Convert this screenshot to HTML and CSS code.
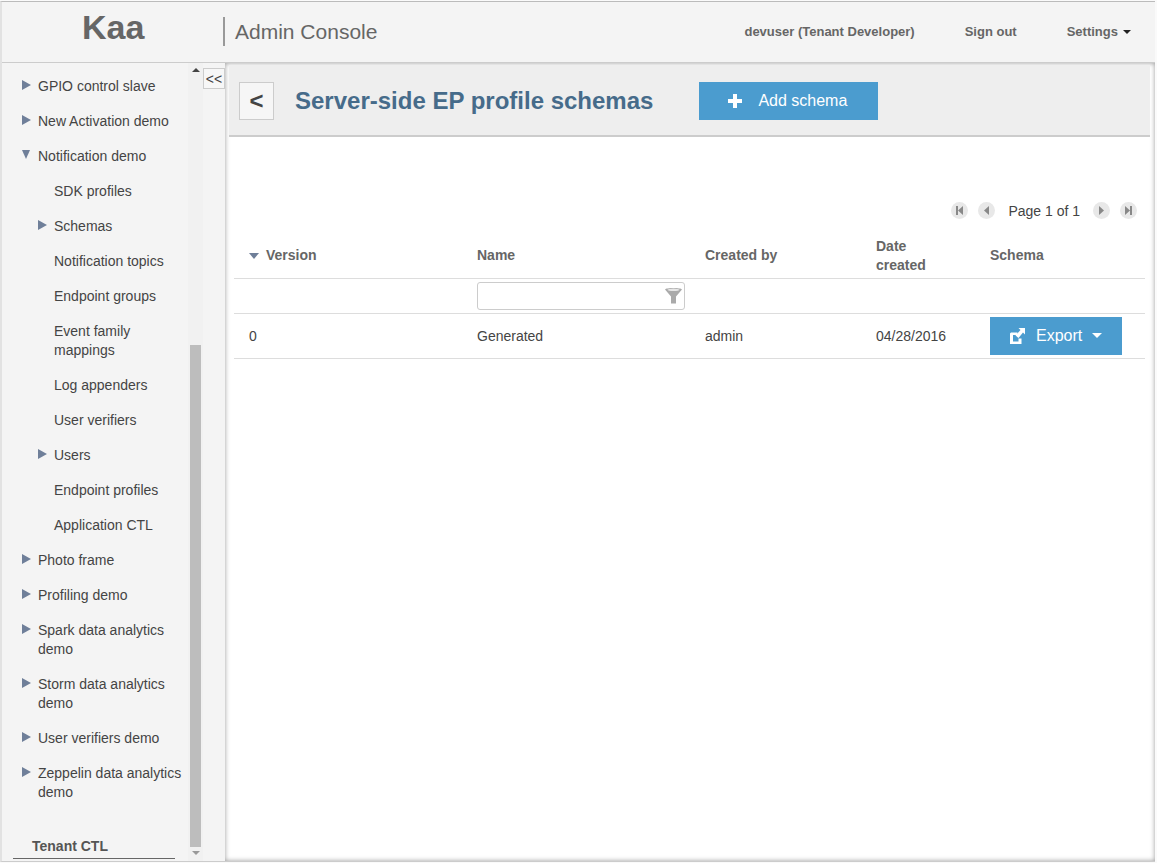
FILE: index.html
```html
<!DOCTYPE html>
<html lang="en">
<head>
    <meta charset="UTF-8">
    <title>Kaa Admin Console</title>
    <link rel="stylesheet" href="styles.css">
</head>
<body>

<div class="app">
    <!-- Top bar -->
    <header class="topbar">
        <div class="logo">Kaa</div>
        <div class="console-title">Admin Console</div>
        <nav class="top-links">
            <a class="top-link user-link">devuser (Tenant Developer)</a>
            <a class="top-link signout-link">Sign out</a>
            <a class="top-link">Settings<span class="caret"></span></a>
        </nav>
    </header>

    <div class="workspace">
        <!-- Navigation tree -->
        <aside class="sidebar">
            <div class="tree">
                <ul class="tree-list">
                    <li class="tree-row"><span class="arrow"></span>GPIO control slave</li>
                    <li class="tree-row"><span class="arrow"></span>New Activation demo</li>
                    <li class="tree-row"><span class="arrow arrow-open"></span>Notification demo</li>
                    <li class="tree-row child">SDK profiles</li>
                    <li class="tree-row child"><span class="arrow"></span>Schemas</li>
                    <li class="tree-row child">Notification topics</li>
                    <li class="tree-row child">Endpoint groups</li>
                    <li class="tree-row child">Event family<br>mappings</li>
                    <li class="tree-row child">Log appenders</li>
                    <li class="tree-row child">User verifiers</li>
                    <li class="tree-row child"><span class="arrow"></span>Users</li>
                    <li class="tree-row child">Endpoint profiles</li>
                    <li class="tree-row child">Application CTL</li>
                    <li class="tree-row"><span class="arrow"></span>Photo frame</li>
                    <li class="tree-row"><span class="arrow"></span>Profiling demo</li>
                    <li class="tree-row"><span class="arrow"></span>Spark data analytics<br>demo</li>
                    <li class="tree-row"><span class="arrow"></span>Storm data analytics<br>demo</li>
                    <li class="tree-row"><span class="arrow"></span>User verifiers demo</li>
                    <li class="tree-row"><span class="arrow"></span>Zeppelin data analytics<br>demo</li>
                </ul>
                <div class="tree-section">Tenant CTL</div>
            </div>
            <div class="scrollbar">
                <span class="scroll-up"></span>
                <div class="scroll-thumb"></div>
                <span class="scroll-down"></span>
            </div>
            <div class="collapse-col">
                <button class="collapse-btn">&lt;&lt;</button>
            </div>
        </aside>

        <!-- Main panel -->
        <main class="main">
            <div class="toolbar">
                <button class="back-btn">&lt;</button>
                <h1 class="page-title">Server-side EP profile schemas</h1>
                <button class="primary-btn add-btn">
                    <svg class="plus-icon" width="14" height="14" viewBox="0 0 14 14"><path d="M5 0h4v5h5v4H9v5H5V9H0V5h5z" fill="#fff"/></svg>
                    Add schema
                </button>
            </div>

            <div class="pager">
                <span class="page-icon"><svg width="17" height="17" viewBox="0 0 17 17"><path d="M5 4h2v9H5zM12 4v9L7 8.500z" fill="#888"/></svg></span>
                <span class="page-icon"><svg width="17" height="17" viewBox="0 0 17 17"><path d="M11 4v9L6 8.500z" fill="#888"/></svg></span>
                <span class="page-text">Page 1 of 1</span>
                <span class="page-icon"><svg width="17" height="17" viewBox="0 0 17 17"><path d="M6 4v9l5-4.500z" fill="#888"/></svg></span>
                <span class="page-icon"><svg width="17" height="17" viewBox="0 0 17 17"><path d="M5 4v9l5-4.500zM10 4h2v9h-2z" fill="#888"/></svg></span>
            </div>

            <table class="grid">
                <colgroup>
                    <col class="col-a"><col class="col-a"><col class="col-b"><col class="col-c"><col class="col-d">
                </colgroup>
                <thead>
                    <tr class="head-row">
                        <th><span class="sort-arrow"></span>Version</th>
                        <th>Name</th>
                        <th>Created by</th>
                        <th class="date-head">Date<br>created</th>
                        <th>Schema</th>
                    </tr>
                    <tr class="filter-row">
                        <th></th>
                        <th>
                            <div class="filter-box">
                                <input class="filter-input" type="text">
                                <svg class="filter-icon" width="17" height="17" viewBox="0 0 17 17"><path d="M0 2.500C1 .5 16 .5 17 2.500L11 9.500V16.500H6V9.500z" fill="#aaa"/><ellipse cx="8.500" cy="2.800" rx="6" ry="1.200" fill="#e6e6e6"/></svg>
                            </div>
                        </th>
                        <th></th>
                        <th></th>
                        <th></th>
                    </tr>
                </thead>
                <tbody>
                    <tr class="data-row">
                        <td class="text-cell">0</td>
                        <td class="text-cell">Generated</td>
                        <td class="text-cell">admin</td>
                        <td class="text-cell">04/28/2016</td>
                        <td>
                            <button class="primary-btn export-btn">
                                <svg class="export-icon" width="15" height="16" viewBox="0 0 15 16"><path d="M1 4.500H7.500V7H3V13.500H8.500V10.500H11.500V16H0V5.500z" fill="#fff"/><path d="M8.500 0H15V6.500L13 4.500 8.500 10 5.500 7.500 10.500 2z" fill="#fff"/></svg>
                                Export
                                <span class="btn-caret"></span>
                            </button>
                        </td>
                    </tr>
                </tbody>
            </table>
        </main>
    </div>
</div>

</body>
</html>
```

FILE: styles.css
```css
* {
    box-sizing: border-box;
}
html, body {
    height: 100%;
}
body {
    margin: 0;
    font-family: "Liberation Sans", Arial, sans-serif;
    font-size: 14px;
    color: #444;
    background: #fafafa;
    overflow: hidden;
}
.app {
    width: 1155px;
    height: 861px;
    margin-top: 1px;
    display: flex;
    flex-direction: column;
    background: #f4f4f4;
    border-top: 1px solid #bbb;
    border-left: 2px solid #e2e2e2;
    border-bottom: 1px solid #ccc;
}

/* top bar */
.topbar {
    height: 61px;
    flex: none;
    display: flex;
    align-items: flex-start;
    border-bottom: 1px solid #ccc;
    color: #666;
}
.logo {
    width: 221px;
    padding-left: 80px;
    font-size: 34px;
    font-weight: bold;
    line-height: 50px;
    color: #666;
}
.console-title {
    margin-top: 15px;
    padding-left: 10px;
    height: 29px;
    border-left: 2px solid #999;
    font-size: 21px;
    line-height: 29px;
}
.top-links {
    margin-left: auto;
    padding-right: 24px;
    display: flex;
    gap: 50px;
    font-size: 13px;
    font-weight: bold;
    line-height: 60px;
}
.caret {
    display: inline-block;
    margin-left: 5px;
    vertical-align: 2px;
    border-top: 4px solid #222;
    border-left: 4px solid transparent;
    border-right: 4px solid transparent;
}

/* sidebar */
.workspace {
    flex: 1;
    display: flex;
    min-height: 0;
}
.sidebar {
    width: 223px;
    flex: none;
    display: flex;
}
.tree {
    width: 186px;
    flex: none;
    padding-top: 6px;
    overflow: hidden;
}
.tree-list {
    list-style: none;
    margin: 0;
    padding: 0;
}
.tree-row {
    position: relative;
    padding: 8px 0 8px 36px;
    line-height: 19px;
}
.tree-row.child {
    padding-left: 52px;
}
.arrow {
    position: absolute;
    left: 20px;
    top: 11px;
    border-left: 9px solid #6f7f99;
    border-top: 5px solid transparent;
    border-bottom: 5px solid transparent;
}
.child .arrow {
    left: 36px;
}
.arrow-open {
    border-top: 9px solid #6f7f99;
    border-left: 4.500px solid transparent;
    border-right: 4.500px solid transparent;
    border-bottom: 0;
}
.tree-section {
    margin: 27px 0 0 11px;
    width: 162px;
    padding: 0 0 2px 19px;
    border-bottom: 1px solid #666;
    font-weight: bold;
    line-height: 19px;
    color: #555;
}
.scrollbar {
    width: 15px;
    flex: none;
    display: flex;
    flex-direction: column;
    align-items: center;
    background: #f1f1f1;
    padding-top: 5px;
}
.scroll-up {
    border-bottom: 4px solid #444;
    border-left: 4px solid transparent;
    border-right: 4px solid transparent;
}
.scroll-thumb {
    width: 11px;
    height: 502px;
    margin-top: 273px;
    background: #bdbdbd;
}
.scroll-down {
    margin-top: 4px;
    border-top: 4px solid #999;
    border-left: 4px solid transparent;
    border-right: 4px solid transparent;
}
.collapse-col {
    flex: 1;
    padding-top: 5px;
}
.collapse-btn {
    display: block;
    width: 22px;
    height: 21px;
    padding: 0;
    border: 1px solid #ccc;
    background: #f7f7f7;
    font-family: "Liberation Sans", Arial, sans-serif;
    font-size: 14px;
    color: #444;
}

/* main panel */
.main {
    flex: 1;
    min-width: 0;
    padding: 2px 5px 0 4px;
    background: #fff;
    box-shadow: inset 0 0 5px rgba(0, 0, 0, .4);
}
.toolbar {
    height: 72px;
    display: flex;
    align-items: center;
    padding: 2px 0 0 10px;
    background: #eee;
    border-bottom: 2px solid #ccc;
}
.back-btn {
    width: 35px;
    height: 38px;
    padding: 0;
    border: 1px solid #ccc;
    background: #f6f6f6;
    font-family: "Liberation Sans", Arial, sans-serif;
    font-size: 24px;
    font-weight: bold;
    color: #444;
}
.page-title {
    margin: 0 0 0 21px;
    font-size: 24px;
    font-weight: bold;
    color: #466b8a;
}
.primary-btn {
    border: 0;
    background: #4b9ccf;
    color: #fff;
    font-family: "Liberation Sans", Arial, sans-serif;
    font-size: 16px;
    display: flex;
    align-items: center;
}
.add-btn {
    width: 179px;
    height: 38px;
    margin-left: 46px;
    padding-left: 29px;
}
.plus-icon {
    margin-right: 16px;
}
.pager {
    margin-top: 63px;
    padding-right: 13px;
    height: 20px;
    display: flex;
    justify-content: flex-end;
    align-items: center;
    gap: 10px;
}
.page-icon {
    width: 17px;
    height: 17px;
    border-radius: 50%;
    background: #e8e8e8;
}
.page-icon svg {
    display: block;
}
.page-text {
    margin: 2px 3px 0;
    line-height: 16px;
}

/* table */
.grid {
    width: 911px;
    margin: 13px 0 0 5px;
    border-collapse: collapse;
    table-layout: fixed;
}
.col-a { width: 228px; }
.col-b { width: 171px; }
.col-c { width: 114px; }
.col-d { width: 170px; }
.grid th, .grid td {
    padding: 0 0 0 15px;
    text-align: left;
    line-height: 19px;
}
.grid th {
    color: #666;
}
.grid .date-head, .grid .text-cell {
    padding-top: 2px;
}
.head-row {
    height: 45px;
    border-bottom: 1px solid #ddd;
}
.filter-row {
    height: 35px;
    border-bottom: 1px solid #ddd;
}
.data-row {
    height: 45px;
    border-bottom: 1px solid #ddd;
}
.sort-arrow {
    display: inline-block;
    margin-right: 7px;
    vertical-align: 1px;
    border-top: 6px solid #6f7f99;
    border-left: 5px solid transparent;
    border-right: 5px solid transparent;
}
.filter-box {
    position: relative;
    width: 208px;
}
.filter-input {
    display: block;
    width: 100%;
    height: 28px;
    border: 1px solid #ccc;
    border-radius: 3px;
    background: #fff;
}
.filter-icon {
    position: absolute;
    right: 3px;
    top: 5px;
}
.export-btn {
    width: 132px;
    height: 38px;
    padding-left: 20px;
}
.export-icon {
    margin-right: 11px;
}
.btn-caret {
    margin-left: 10px;
    border-top: 5px solid #fff;
    border-left: 5px solid transparent;
    border-right: 5px solid transparent;
}
```
